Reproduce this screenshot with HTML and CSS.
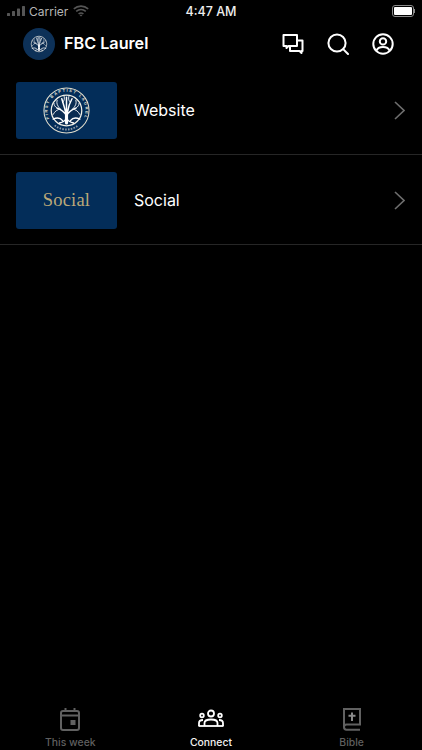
FILE: index.html
```html
<!DOCTYPE html>
<html lang="en">
<head>
    <meta charset="UTF-8">
    <meta name="viewport" content="width=device-width, initial-scale=1.0">
    <title>FBC Laurel</title>
    <link rel="stylesheet" href="styles.css">
</head>
<body>

<svg class="defs" width="0" height="0">
    <symbol id="tree" viewBox="0 0 60 60">
        <circle cx="30" cy="30" r="19.5" fill="#0a2c52" stroke="#f2f0e6" stroke-width="1.6"/>
        <g fill="none" stroke="#fff" stroke-linecap="round">
            <path stroke-width="4" d="M30 46V34"/>
            <path stroke-width="1.9" d="M30 37C27 31 24 29 18 27M30 37C33 31 36 29 42 27M29 33C28 27 26 22 24 15M31 33C32 27 33 22 37 15M30 31V13"/>
            <path stroke-width="1.1" d="M22 28C18 29 15 31 13 35M38 28C42 29 45 31 47 35M21 27C18 23 17 21 18 17M39 27C42 23 43 21 42 17M25 20C27 18 28 15 27 12M35 20C33 18 32 15 33 12M18 27C15 25 14 23 14 21M42 27C45 25 46 23 46 21"/>
            <path stroke-width="1.8" d="M21 46C25 45 28 44 29 41M39 46C35 45 32 44 31 41M13 41C17 39 22 39 25 43M47 41C43 39 38 39 35 43"/>
        </g>
    </symbol>
</svg>

<div class="status-bar">
    <div class="status-left">
        <svg class="signal" width="18" height="10" viewBox="0 0 18 10">
            <rect x="0" y="7" width="3" height="3" rx=".6" fill="#555"/>
            <rect x="5" y="5" width="3" height="5" rx=".6" fill="#555"/>
            <rect x="10" y="2.5" width="3" height="7.5" rx=".6" fill="#555"/>
            <rect x="15" y="0" width="3" height="10" rx=".6" fill="#555"/>
        </svg>
        <span class="carrier">Carrier</span>
        <svg class="wifi" width="16" height="12" viewBox="0 0 16 12" fill="none" stroke="#555" stroke-width="1.6">
            <path d="M.8 3.8C5 .2 11 .2 15.2 3.8"/>
            <path d="M3.2 6.4C6 4 10 4 12.8 6.4"/>
            <path d="M5.6 8.9C7 7.8 9 7.8 10.4 8.9"/>
            <path d="M8 11.6 6.6 10.2C7.4 9.7 8.6 9.7 9.4 10.2Z" fill="#555" stroke="none"/>
        </svg>
    </div>
    <div class="clock">4:47 AM</div>
    <div class="status-right">
        <div class="battery"><div class="battery-fill"></div></div>
        <div class="battery-cap"></div>
    </div>
</div>

<header class="app-header">
    <div class="brand">
        <div class="avatar">
            <svg width="24" height="24"><use href="#tree"/></svg>
        </div>
        <div class="brand-name">FBC Laurel</div>
    </div>
    <div class="header-actions">
        <svg class="action" width="22" height="22" viewBox="0 0 22 22" fill="none" stroke="#fff" stroke-width="2" stroke-linejoin="round">
            <path d="M1.5 2H15V13H6.5L4.5 15V13H1.5Z"/>
            <path d="M15 7.5H20.5V18H19.5V20L17.5 18H8V13"/>
        </svg>
        <svg class="action" width="22" height="22" viewBox="0 0 22 22" fill="none" stroke="#fff" stroke-width="2" stroke-linecap="round">
            <circle cx="10" cy="10" r="8.6"/>
            <path d="M16.4 16.4 21 21"/>
        </svg>
        <svg class="action" width="22" height="22" viewBox="0 0 22 22" fill="none" stroke="#fff" stroke-width="2">
            <circle cx="11" cy="11" r="9.7"/>
            <circle cx="11" cy="8.4" r="3.2"/>
            <path d="M4.4 17.6C5.5 14.8 8 14 11 14S16.5 14.8 17.6 17.6"/>
        </svg>
    </div>
</header>

<main class="list">
    <a class="row">
        <div class="thumb">
            <svg class="seal" width="47" height="47" viewBox="0 0 60 60">
                <circle cx="30" cy="30" r="28.8" fill="none" stroke="#e4e0cf" stroke-width="1.3"/>
                <path id="sealArc" d="M8.6 41.5A24.2 24.2 0 1 1 51.4 41.5" fill="none"/>
                <text class="seal-text"><textPath href="#sealArc" startOffset="50%" text-anchor="middle">FIRST BAPTIST LAUREL</textPath></text>
                <path d="M15 49A24 24 0 0 0 45 49" fill="none" stroke="#8f9aa8" stroke-width="2.4" stroke-dasharray="2 1.6"/>
                <use href="#tree" width="60" height="60"/>
            </svg>
        </div>
        <div class="row-label">Website</div>
        <svg class="chevron" width="11" height="19" viewBox="0 0 11 19" fill="none" stroke="#6e6e6e" stroke-width="1.6">
            <path d="M1 1 10 9.5 1 18"/>
        </svg>
    </a>
    <a class="row">
        <div class="thumb">
            <span class="thumb-word">Social</span>
        </div>
        <div class="row-label">Social</div>
        <svg class="chevron" width="11" height="19" viewBox="0 0 11 19" fill="none" stroke="#6e6e6e" stroke-width="1.6">
            <path d="M1 1 10 9.5 1 18"/>
        </svg>
    </a>
</main>

<nav class="tab-bar">
    <div class="tab">
        <svg width="20" height="23" viewBox="0 0 20 23" fill="none" stroke="#616161" stroke-width="2">
            <rect x="1" y="3" width="18" height="19" rx="2"/>
            <path d="M1 7.5H19M5.5 0V3M14.5 0V3"/>
            <rect x="10.5" y="12" width="5" height="5" fill="#616161" stroke="none"/>
        </svg>
        <span>This week</span>
    </div>
    <div class="tab active">
        <svg width="26" height="23" viewBox="0 0 26 23" fill="none" stroke="#fff" stroke-width="1.8">
            <circle cx="13" cy="5.5" r="3"/>
            <circle cx="4" cy="7.5" r="1.8"/>
            <circle cx="22" cy="7.5" r="1.8"/>
            <path d="M1 18V15C1 13 2.5 12 5 12M25 18V15C25 13 23.5 12 21 12"/>
            <path d="M6.5 18V15C6.5 12.5 9.5 11.5 13 11.5S19.5 12.5 19.5 15V18"/>
            <path d="M.5 18H25.5"/>
        </svg>
        <span>Connect</span>
    </div>
    <div class="tab">
        <svg width="18" height="23" viewBox="0 0 18 23" fill="none" stroke="#616161" stroke-width="2">
            <path d="M1 19V1H17V16.5H3.5C2 16.5 1 17.6 1 19S2 21.8 3.5 21.8H17"/>
            <path d="M9 4.5V13M5.5 7.8H12.5" stroke="#8a8a8a"/>
        </svg>
        <span>Bible</span>
    </div>
</nav>

</body>
</html>
```

FILE: styles.css
```css
html, body {
    margin: 0;
    height: 100%;
}
body {
    width: 422px;
    height: 750px;
    background-color: #000;
    color: #fff;
    font-family: Inter, 'Liberation Sans', sans-serif;
    display: flex;
    flex-direction: column;
    overflow: hidden;
}
.defs {
    display: block;
    height: 0;
}
.seal-text {
    font-family: 'Liberation Sans', sans-serif;
    font-size: 5px;
    font-weight: bold;
    letter-spacing: 1.9px;
    fill: #e8e6da;
}

.status-bar {
    height: 22px;
    flex: none;
    display: grid;
    grid-template-columns: 1fr auto 1fr;
    align-items: center;
    font-size: 12.5px;
}
.status-left {
    display: flex;
    align-items: center;
    padding-left: 7px;
}
.signal {
    margin-right: 4px;
}
.carrier {
    color: #b5b5b5;
    font-size: 12px;
}
.wifi {
    margin-left: 5px;
}
.clock {
    font-weight: 500;
    color: #eee;
}
.status-right {
    display: flex;
    align-items: center;
    justify-content: flex-end;
    padding-right: 7px;
}
.battery {
    width: 22px;
    height: 12px;
    box-sizing: border-box;
    border: 1px solid #8a8a8a;
    border-radius: 3px;
    padding: 1px;
}
.battery-fill {
    height: 100%;
    background-color: #fff;
    border-radius: 1px;
}
.battery-cap {
    width: 1px;
    height: 4px;
    background-color: #8a8a8a;
}

.app-header {
    height: 43px;
    flex: none;
    display: flex;
    align-items: center;
    justify-content: space-between;
    padding: 0 28px 0 23px;
}
.brand {
    display: flex;
    align-items: center;
    gap: 9px;
}
.avatar {
    width: 32px;
    height: 32px;
    border-radius: 50%;
    background-color: #0d3158;
    display: flex;
    align-items: center;
    justify-content: center;
}
.brand-name {
    font-size: 16.2px;
    font-weight: 600;
    padding-bottom: 1px;
}
.header-actions {
    display: flex;
    align-items: center;
    gap: 23px;
}

.list {
    flex: 1;
}
.row {
    height: 90px;
    box-sizing: border-box;
    display: flex;
    align-items: center;
    padding: 1px 17px 0 16px;
    border-bottom: 1px solid #262626;
}
.thumb {
    width: 101px;
    height: 57px;
    flex: none;
    background-color: #032d59;
    border-radius: 3px;
    display: flex;
    align-items: center;
    justify-content: center;
}
.thumb-word {
    font-family: 'Liberation Serif', serif;
    font-size: 18.5px;
    letter-spacing: .2px;
    color: #bba878;
}
.row-label {
    flex: 1;
    margin-left: 17px;
    font-size: 16px;
    color: #fff;
    padding-bottom: 1px;
}

.tab-bar {
    flex: none;
    height: 49px;
    display: grid;
    grid-template-columns: repeat(3, 1fr);
}
.tab {
    display: flex;
    flex-direction: column;
    align-items: center;
    justify-content: flex-end;
    gap: 5px;
    font-size: 10.4px;
    font-weight: 500;
    color: #5f5f5f;
    padding-bottom: 1px;
}
.tab.active {
    color: #f2f2f2;
}
```
